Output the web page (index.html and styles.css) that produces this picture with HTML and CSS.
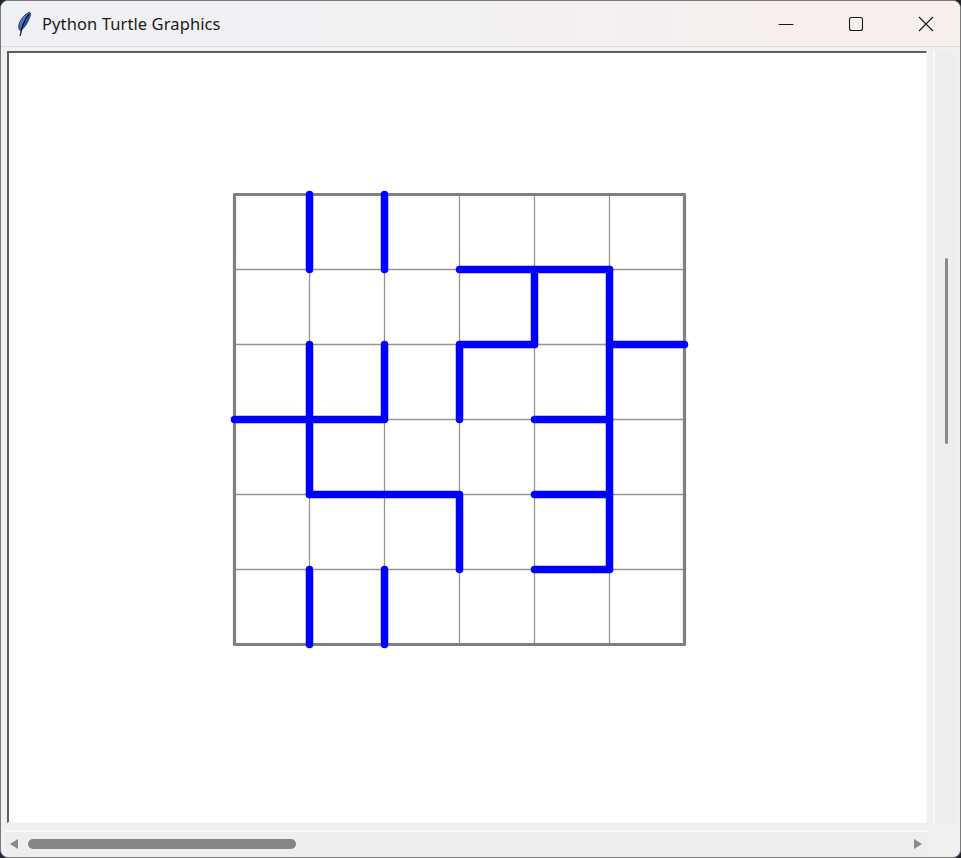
FILE: index.html
```html
<!DOCTYPE html>
<html lang="en">
<head>
<meta charset="utf-8">
<title>Python Turtle Graphics</title>
<link rel="stylesheet" href="styles.css">
</head>
<body>
<div class="window">
  <header class="titlebar">
    <div class="title-left">
      <svg class="app-icon" width="16" height="26" viewBox="0 0 16 26">
        <defs>
          <linearGradient id="fg" x1="0" y1="0" x2="1" y2="1">
            <stop offset="0" stop-color="#8fb2f2"/>
            <stop offset="0.55" stop-color="#2f5fc4"/>
            <stop offset="1" stop-color="#1b3a86"/>
          </linearGradient>
        </defs>
        <path d="M13.8 1.2 C9 2.8 4.2 8 2.9 14 C2.3 17 3.2 19.2 4.6 19.8 C8.3 17 11.8 12 14 5.5 C14.6 3.6 14.5 2.1 13.8 1.2 Z" fill="url(#fg)" stroke="#1c2b52" stroke-width="0.9"/>
        <path d="M12.8 3.5 C9 8 6.5 13 4.2 24.5" fill="none" stroke="#111" stroke-width="1.2" stroke-linecap="round"/>
      </svg>
      <span class="title-text">Python Turtle Graphics</span>
    </div>
    <div class="controls">
      <div class="ctl">
        <svg width="16" height="16" viewBox="0 0 16 16"><path d="M0.5 8.5 H15.5" stroke="#1a1a1a" stroke-width="1"/></svg>
      </div>
      <div class="ctl">
        <svg width="16" height="16" viewBox="0 0 16 16"><rect x="1.5" y="1.5" width="13" height="13" rx="2" fill="none" stroke="#1a1a1a" stroke-width="1.1"/></svg>
      </div>
      <div class="ctl">
        <svg width="16" height="16" viewBox="0 0 16 16"><path d="M1 1 L15 15 M15 1 L1 15" stroke="#1a1a1a" stroke-width="1.1"/></svg>
      </div>
    </div>
  </header>
  <main class="client">
    <div class="canvas-frame">
      <svg class="canvas" width="917" height="769" viewBox="9 53 917 769">
        <g stroke="#959595" stroke-width="1.3" fill="none">
          <path d="M309.5 194.5 V644.5 M384.5 194.5 V644.5 M459.5 194.5 V644.5 M534.5 194.5 V644.5 M609.5 194.5 V644.5"/>
          <path d="M234.5 269.5 H684.5 M234.5 344.5 H684.5 M234.5 419.5 H684.5 M234.5 494.5 H684.5 M234.5 569.5 H684.5"/>
        </g>
        <rect x="234.5" y="194.5" width="450" height="450" fill="none" stroke="#808080" stroke-width="3.2" stroke-linejoin="round"/>
        <g stroke="#0000ff" stroke-width="7.5" stroke-linecap="round" stroke-linejoin="round" fill="none">
          <path d="M309.5 194.5 V269.5"/>
          <path d="M384.5 194.5 V269.5"/>
          <path d="M459.5 269.5 H609.5"/>
          <path d="M534.5 269.5 V344.5"/>
          <path d="M609.5 269.5 V569.5"/>
          <path d="M609.5 344.5 H684.5"/>
          <path d="M534.5 344.5 H459.5 V419.5"/>
          <path d="M309.5 344.5 V494.5"/>
          <path d="M384.5 344.5 V419.5 H234.5"/>
          <path d="M534.5 419.5 H609.5"/>
          <path d="M309.5 494.5 H459.5 V569.5"/>
          <path d="M534.5 494.5 H609.5"/>
          <path d="M534.5 569.5 H609.5"/>
          <path d="M309.5 569.5 V644.5"/>
          <path d="M384.5 569.5 V644.5"/>
        </g>
      </svg>
    </div>
    <div class="vscroll">
      <div class="vthumb"></div>
    </div>
    <div class="hscroll">
      <span class="arrow arrow-left"></span>
      <div class="htrack"><div class="hthumb"></div></div>
      <span class="arrow arrow-right"></span>
    </div>
    <div class="corner"></div>
  </main>
</div>
</body>
</html>
```
FILE: styles.css
```css
* { box-sizing: border-box; }
html, body { margin: 0; padding: 0; }
body {
  width: 961px;
  height: 858px;
  background: #1d2430;
  overflow: hidden;
  font-family: "Noto Sans", "Open Sans", "DejaVu Sans", sans-serif;
}
.window {
  width: 961px;
  height: 858px;
  border: 1px solid #7a7a7a;
  border-radius: 8px;
  overflow: hidden;
  display: flex;
  flex-direction: column;
  background: #f0f0f0;
}
.titlebar {
  height: 46px;
  flex: none;
  display: flex;
  align-items: center;
  justify-content: space-between;
  background: linear-gradient(to right, #eff0f6 0%, #f3f0f2 50%, #f8efeb 100%);
  border-bottom: 1px solid #dcdcdc;
}
.title-left {
  display: flex;
  align-items: center;
  padding-left: 15px;
}
.app-icon { display: block; margin-top: 1px; }
.title-text {
  margin-left: 10px;
  font-size: 16.5px;
  color: #1a1a1a;
  letter-spacing: 0.1px;
  margin-top: -1px;
}
.controls {
  display: flex;
  align-items: center;
  height: 100%;
  margin-right: -1px;
}
.ctl {
  width: 70px;
  height: 100%;
  display: flex;
  align-items: center;
  justify-content: center;
  padding-top: 1px;
}
.ctl svg { display: block; }
.client {
  flex: 1;
  display: grid;
  grid-template-columns: 920px 24px;
  grid-template-rows: 772px 25px;
  column-gap: 6px;
  row-gap: 7px;
  padding: 4px 3px 2px 6px;
}
.canvas-frame {
  border-left: 2px solid #5e5e5e;
  border-top: 2px solid #5e5e5e;
  border-right: 1px solid #fbfbfb;
  border-bottom: 1px solid #fbfbfb;
  background: #ffffff;
  overflow: hidden;
}
.canvas { display: block; }
.vscroll {
  border-left: 2px solid #f9f9f9;
  background: #eeeeee;
  display: flex;
  justify-content: center;
  padding-top: 207px;
  padding-left: 1px;
}
.vthumb {
  width: 3px;
  height: 186px;
  background: #8a8a8a;
  border-radius: 2px;
}
.hscroll {
  border-top: 2px solid #f9f9f9;
  background: #eeeeee;
  display: flex;
  align-items: center;
  padding: 0 5px 0 3px;
  margin-left: -2px;
}
.arrow {
  width: 0;
  height: 0;
  border-top: 5.5px solid transparent;
  border-bottom: 5.5px solid transparent;
  flex: none;
  margin-top: 1px;
}
.arrow-left { border-right: 8px solid #8a8a8a; margin-left: 2px; }
.arrow-right { border-left: 8px solid #8a8a8a; }
.htrack {
  flex: 1;
  padding: 0 10px 0 10px;
  display: flex;
}
.hthumb {
  width: 268px;
  height: 10px;
  background: #868686;
  border-radius: 5px;
  margin-top: 1px;
}
.corner { background: #f0f0f0; }
```
